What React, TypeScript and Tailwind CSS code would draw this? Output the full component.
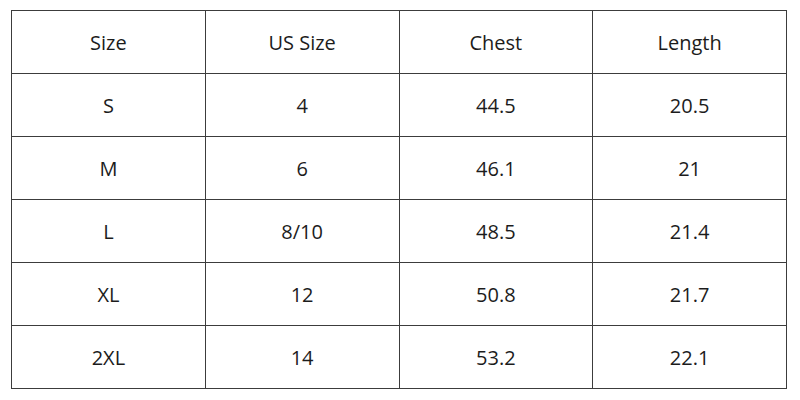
import React from "react";

const headers = ["Size", "US Size", "Chest", "Length"];
const rows = [
  ["S", "4", "44.5", "20.5"],
  ["M", "6", "46.1", "21"],
  ["L", "8/10", "48.5", "21.4"],
  ["XL", "12", "50.8", "21.7"],
  ["2XL", "14", "53.2", "22.1"],
];

export default function App() {
  return (
    <div className="w-[800px] h-[400px] bg-white pl-[11px] pt-[10px]" style={{ fontFamily: '"Open Sans", "Noto Sans", sans-serif' }}>
      <table className="border-collapse w-[776px] text-[20px] leading-none text-[#1c1c1c] table-fixed">
        <tbody>
          <tr className="h-[63px]">
            {headers.map((h) => (
              <td key={h} className="border border-[#3c3c3c] text-center align-middle pt-[2px]">
                {h}
              </td>
            ))}
          </tr>
          {rows.map((r) => (
            <tr key={r[0]} className="h-[63px]">
              {r.map((c, i) => (
                <td key={i} className="border border-[#3c3c3c] text-center align-middle pt-[2px]">
                  {c}
                </td>
              ))}
            </tr>
          ))}
        </tbody>
      </table>
    </div>
  );
}
